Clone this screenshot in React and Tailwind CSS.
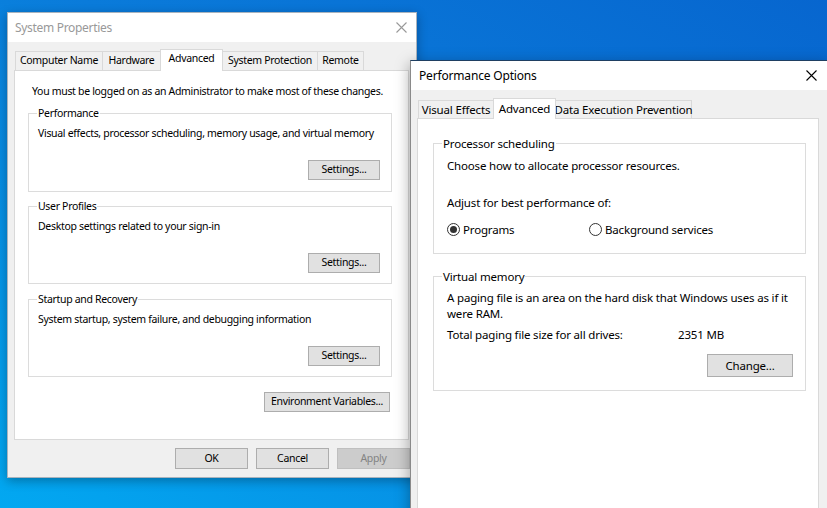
import React from 'react';

function CloseX({ className }) {
  return (
    <svg width="11" height="11" viewBox="0 0 11 11" className={className}>
      <path d="M0.5 0.5 L10.5 10.5 M10.5 0.5 L0.5 10.5" stroke="currentColor" strokeWidth="1.1" fill="none" />
    </svg>
  );
}

function Btn({ children, className = '', disabled }) {
  return (
    <button
      className={`flex items-center justify-center border ${disabled ? 'bg-[#cccccc] border-[#bfbfbf] text-[#838383]' : 'bg-[#e1e1e1] border-[#adadad] text-black'} ${className}`}
    >
      {children}
    </button>
  );
}

function Group({ label, className = '', children }) {
  return (
    <div className={`relative border border-[#dcdcdc] ${className}`}>
      <span className="absolute -top-[8px] left-[8px] bg-white px-[1px] leading-[15px]">{label}</span>
      {children}
    </div>
  );
}

function Tab({ label, active, className = '' }) {
  if (active) {
    return (
      <div className={`relative z-10 -mb-px flex items-start justify-center pt-[1px] bg-white border border-b-0 border-[#d9d9d9] ${className}`}>
        {label}
      </div>
    );
  }
  return (
    <div className={`flex items-center justify-center bg-[#f0f0f0] border border-b-0 border-[#d9d9d9] -mr-px ${className}`}>
      {label}
    </div>
  );
}

function Radio({ checked, label }) {
  return (
    <div className="flex items-center gap-[3px]">
      <span className="w-[13px] h-[13px] rounded-full border border-[#333] bg-white flex items-center justify-center">
        {checked && <span className="w-[7px] h-[7px] rounded-full bg-[#333]" />}
      </span>
      <span>{label}</span>
    </div>
  );
}

function SystemProperties() {
  const settingsGroups = [
    { label: 'Performance', text: 'Visual effects, processor scheduling, memory usage, and virtual memory', h: 'h-[79px]', mt: 'mt-[14px]' },
    { label: 'User Profiles', text: 'Desktop settings related to your sign-in', h: 'h-[78px]', mt: 'mt-[14px]' },
    { label: 'Startup and Recovery', text: 'System startup, system failure, and debugging information', h: 'h-[78px]', mt: 'mt-[15px]' },
  ];

  return (
    <div className="absolute left-[7px] top-[12px] w-[410px] h-[466px] flex flex-col bg-[#f0f0f0] border border-[#a9b3bd] shadow-[0_3px_10px_rgba(0,0,0,0.3)] text-[10.5px] tracking-[-0.03em] text-black">
      {/* Title bar */}
      <div className="h-[29px] bg-white flex items-center justify-between pl-[7px] pr-[9px]">
        <span className="text-[12px] text-[#999]">System Properties</span>
        <CloseX className="text-[#999]" />
      </div>

      {/* Tabs */}
      <div className="mt-[7px] ml-[7px] h-[21px] flex items-end">
        <Tab label="Computer Name" className="w-[88px] h-[19px]" />
        <Tab label="Hardware" className="w-[59px] h-[19px]" />
        <Tab label="Advanced" active className="w-[63px] h-[22px]" />
        <Tab label="System Protection" className="w-[96px] h-[19px] -ml-px" />
        <Tab label="Remote" className="w-[47px] h-[19px]" />
      </div>

      {/* Panel */}
      <div className="ml-[6px] w-[395px] h-[370px] bg-white border border-[#d9d9d9] flex flex-col">
        <p className="mt-[13px] ml-[17px] leading-[15px]">You must be logged on as an Administrator to make most of these changes.</p>
        {settingsGroups.map(g => (
          <Group key={g.label} label={g.label} className={`${g.mt} ml-[13px] mr-[16px] ${g.h} flex flex-col pt-[12px] pl-[9px] pr-[11px]`}>
            <p className="leading-[15px]">{g.text}</p>
            <Btn className="self-end mt-[19px] w-[72px] h-[20px]">Settings...</Btn>
          </Group>
        ))}
        <Btn className="self-end mt-[15px] mr-[18px] w-[126px] h-[20px]">Environment Variables...</Btn>
      </div>

      {/* Footer */}
      <div className="mt-[8px] pr-[6px] flex justify-end gap-[8px]">
        <Btn className="w-[73px] h-[21px]">OK</Btn>
        <Btn className="w-[73px] h-[21px]">Cancel</Btn>
        <Btn disabled className="w-[73px] h-[21px]">Apply</Btn>
      </div>
    </div>
  );
}

function PerformanceOptions() {
  return (
    <div className="absolute left-[410px] top-[60px] w-[420px] h-[460px] flex flex-col bg-[#f0f0f0] border-t border-l border-t-[#1f3f62] border-l-[#8a8a8a] shadow-[0_4px_14px_rgba(0,0,0,0.35)] text-[11.5px] tracking-[-0.015em] text-black">
      {/* Title bar */}
      <div className="h-[29px] bg-white flex items-center justify-between pl-[8px] pr-[13px]">
        <span className="text-[12px]">Performance Options</span>
        <CloseX className="text-black" />
      </div>

      {/* Tabs */}
      <div className="mt-[8px] ml-[7px] h-[20px] flex items-end">
        <Tab label="Visual Effects" className="w-[76px] h-[18px]" />
        <Tab label="Advanced" active className="w-[63px] h-[21px]" />
        <Tab label="Data Execution Prevention" className="w-[137px] h-[18px] -ml-px" />
      </div>

      {/* Panel */}
      <div className="ml-[6px] w-[402px] flex-1 bg-white border border-[#d9d9d9] flex flex-col">
        <Group label="Processor scheduling" className="mt-[24px] ml-[15px] w-[373px] h-[111px] pt-[14px] pl-[13px]">
          <p className="leading-[16px]">Choose how to allocate processor resources.</p>
          <p className="mt-[21px] leading-[16px]">Adjust for best performance of:</p>
          <div className="mt-[10px] flex items-center">
            <div className="w-[142px]">
              <Radio checked label="Programs" />
            </div>
            <Radio label="Background services" />
          </div>
        </Group>

        <Group label="Virtual memory" className="mt-[22px] ml-[15px] w-[373px] h-[115px] pt-[13px] pl-[13px] pr-[12px] flex flex-col">
          <p className="leading-[16px]">
            A paging file is an area on the hard disk that Windows uses as if it
            <br />
            were RAM.
          </p>
          <div className="mt-[5px] flex leading-[16px]">
            <span className="w-[231px]">Total paging file size for all drives:</span>
            <span>2351 MB</span>
          </div>
          <Btn className="self-end mt-[11px] w-[86px] h-[23px]">Change...</Btn>
        </Group>
      </div>
    </div>
  );
}

export default function App() {
  return (
    <div className="relative w-[827px] h-[508px] overflow-hidden whitespace-nowrap font-['Noto_Sans',sans-serif] bg-[linear-gradient(to_bottom_left,#0766cf_0%,#0a7bda_45%,#02a8f1_100%)]">
      <SystemProperties />
      <PerformanceOptions />
    </div>
  );
}
